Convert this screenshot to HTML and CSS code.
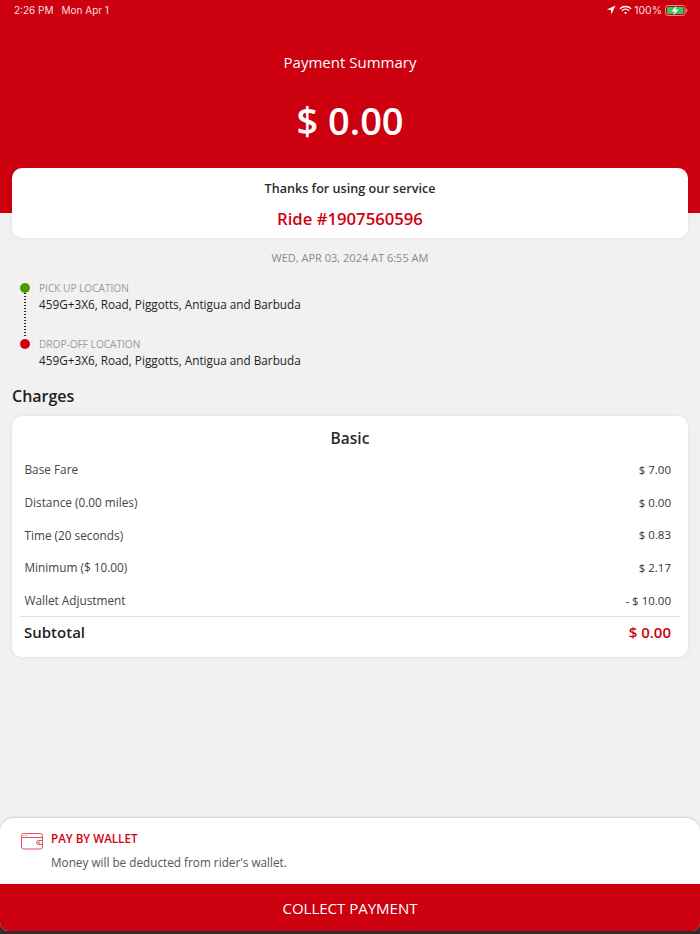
FILE: index.html
```html
<!DOCTYPE html>
<html lang="en">
<head>
    <meta charset="UTF-8">
    <meta name="viewport" content="width=device-width, initial-scale=1.0">
    <title>Payment Summary</title>
    <link rel="stylesheet" href="styles.css">
</head>
<body>
    <div class="page">
        <!-- Header -->
        <div class="header">
            <div class="status-bar">
                <div class="status-left">
                    <span>2:26 PM</span>
                    <span>Mon Apr 1</span>
                </div>
                <div class="status-right">
                    <svg class="icon-location" width="10" height="10" viewBox="0 0 10 10"><path d="M9.5 .5 L.8 4.6 L4.9 5.1 L5.4 9.2 Z" fill="#fff"/></svg>
                    <svg class="icon-wifi" width="13" height="10" viewBox="0 0 14 10" fill="none" stroke="#fff" stroke-width="1.5"><path d="M1 3.6 C4.4 .4 9.6 .4 13 3.6"/><path d="M3.2 5.8 C5.4 3.8 8.6 3.8 10.8 5.8"/><path d="M7 9.6 L5.3 7.8 C6.3 7 7.7 7 8.7 7.8 Z" fill="#fff" stroke="none"/></svg>
                    <span class="battery-text">100%</span>
                    <svg class="icon-battery" width="23" height="11" viewBox="0 0 23 11"><rect x=".5" y=".5" width="19.5" height="10" rx="2.5" fill="none" stroke="#e8898f"/><rect x="2" y="2" width="16.5" height="7" rx="1" fill="#35c759"/><path d="M21 3.6 C22 3.9 22.4 4.6 22.4 5.5 C22.4 6.4 22 7.1 21 7.4 Z" fill="#e8898f"/><path d="M11.6 .6 L6.6 6.4 L9.6 6.4 L8.4 10.4 L13.4 4.6 L10.4 4.6 Z" fill="#fff"/></svg>
                </div>
            </div>
            <div class="header-title">Payment Summary</div>
            <div class="header-amount">$ 0.00</div>
        </div>

        <!-- Thanks card -->
        <div class="card thanks-card">
            <div class="thanks-text">Thanks for using our service</div>
            <div class="ride-number">Ride #1907560596</div>
        </div>

        <div class="ride-date">WED, APR 03, 2024 AT 6:55 AM</div>

        <!-- Locations -->
        <div class="route">
            <div class="route-stop">
                <span class="dot dot-green"></span>
                <div class="stop-label">PICK UP LOCATION</div>
                <div class="stop-address">459G+3X6, Road, Piggotts, Antigua and Barbuda</div>
            </div>
            <div class="route-stop">
                <span class="dot dot-red"></span>
                <div class="stop-label">DROP-OFF LOCATION</div>
                <div class="stop-address">459G+3X6, Road, Piggotts, Antigua and Barbuda</div>
            </div>
        </div>

        <h2 class="charges-title">Charges</h2>

        <!-- Charges card -->
        <div class="card charges-card">
            <div class="charges-type">Basic</div>
            <div class="charge-row"><span>Base Fare</span><span class="charge-value">$ 7.00</span></div>
            <div class="charge-row"><span>Distance (0.00 miles)</span><span class="charge-value">$ 0.00</span></div>
            <div class="charge-row"><span>Time (20 seconds)</span><span class="charge-value">$ 0.83</span></div>
            <div class="charge-row"><span>Minimum ($ 10.00)</span><span class="charge-value">$ 2.17</span></div>
            <div class="charge-row"><span>Wallet Adjustment</span><span class="charge-value">- $ 10.00</span></div>
            <div class="subtotal-row"><span>Subtotal</span><span class="subtotal-value">$ 0.00</span></div>
        </div>

        <!-- Payment method -->
        <div class="footer">
            <div class="wallet-box">
                <div class="wallet-head">
                    <svg class="icon-wallet" width="22" height="17" viewBox="0 0 22 17" fill="none" stroke="#e2545b" stroke-width="1"><rect x=".5" y=".5" width="21" height="15.5" rx="2"/><path d="M.5 4.5 H21.5"/><path d="M21.5 7.5 H17.5 a2 2 0 0 0 0 4 H21.5"/><circle cx="18" cy="9.5" r=".8"/><path d="M2.5 2.5 H3.5 M5 2.5 H6" /></svg>
                    <span class="wallet-title">PAY BY WALLET</span>
                </div>
                <div class="wallet-note">Money will be deducted from rider's wallet.</div>
            </div>
            <button class="collect-btn">COLLECT PAYMENT</button>
        </div>
    </div>
</body>
</html>
```

FILE: styles.css
```css
/* General */
* { box-sizing: border-box; }
html, body { height: 100%; }
body { margin: 0; background-color: #2e2e2e; font-family: "Open Sans", sans-serif; color: #1f1f1f; }
.page { height: 931px; display: flex; flex-direction: column; background-color: #f1f1f1; border-radius: 0 0 8px 8px; overflow: hidden; }

/* Header */
.header { height: 213px; flex-shrink: 0; background-color: #cd000f; color: #fff; text-align: center; }
.status-bar { height: 20px; display: flex; justify-content: space-between; align-items: center; padding: 0 12px 0 14px; font-family: Inter, sans-serif; font-size: 10px; color: #f6dfe0; }
.status-left { display: flex; gap: 8px; }
.status-right { display: flex; align-items: center; gap: 2px; }
.icon-location { margin-right: 1px; }
.icon-battery { margin-left: 1px; }
.battery-text { font-size: 10.5px; }
.header-title { margin-top: 31px; font-size: 15px; line-height: 22px; }
.header-amount { margin-top: 21px; font-size: 38px; line-height: 52px; font-weight: 600; }

/* Cards */
.card { background: #fff; margin: 0 12px; border-radius: 10px; box-shadow: 0 0 4px rgba(0, 0, 0, 0.08); }
.thanks-card { height: 70px; margin-top: -45px; flex-shrink: 0; text-align: center; padding-top: 12px; position: relative; }
.thanks-text { font-size: 12.6px; line-height: 18px; font-weight: 600; color: #2b2b2b; }
.ride-number { margin-top: 10px; font-size: 16.7px; line-height: 22px; font-weight: 600; color: #d0000f; }
.ride-date { margin-top: 12px; text-align: center; font-size: 11px; line-height: 15px; color: #8a8a8a; }

/* Locations */
.route { margin: 16px 0 0 20px; }
.route-stop { position: relative; padding-left: 19px; height: 56px; }
.route-stop:last-child { height: 46px; }
.stop-label { font-size: 10.1px; line-height: 14px; color: #9a9a9a; }
.stop-address { font-size: 11.75px; line-height: 18px; color: #1f1f1f; }
.dot { position: absolute; left: 0; top: 2px; width: 10px; height: 10px; border-radius: 50%; }
.dot-green { background-color: #4f9a00; }
.dot-red { background-color: #d0000f; }
.route-stop:first-child::after { content: ""; position: absolute; left: 4px; top: 12px; width: 2px; height: 44px; background: linear-gradient(#222 50%, transparent 50%) 0 0 / 100% 3px; }

.charges-title { margin: 1px 12px 0; font-size: 16px; line-height: 24px; font-weight: 600; color: #222; }

/* Charges */
.charges-card { margin-top: 8px; height: 241px; flex-shrink: 0; padding: 0 8px; }
.charges-type { text-align: center; padding-top: 11px; font-size: 15.5px; line-height: 22px; font-weight: 600; color: #2b2b2b; margin-bottom: 4px; }
.charge-row { display: flex; justify-content: space-between; align-items: center; height: 32.7px; padding: 0 9px 0 4.5px; font-size: 11.8px; color: #444; }
.charge-value { color: #333; font-size: 11.5px; }
.subtotal-row { display: flex; justify-content: space-between; align-items: center; height: 32px; padding: 0 9px 2px 4px; border-top: 1px solid #dedede; font-size: 15px; font-weight: 600; color: #1f1f1f; }
.subtotal-value { color: #d0000f; }

/* Footer */
.footer { margin-top: auto; }
.wallet-box { height: 66px; background: #fff; border-radius: 14px 14px 0 0; box-shadow: 0 -1px 2px rgba(0, 0, 0, 0.15); padding: 13px 20px 0 21px; }
.wallet-head { display: flex; align-items: flex-start; gap: 8px; }
.icon-wallet { margin-top: 2px; }
.wallet-title { font-size: 11.6px; line-height: 16px; font-weight: 600; color: #d0000f; }
.wallet-note { margin: 4px 0 0 30px; font-size: 11.75px; line-height: 17px; color: #555; }
.collect-btn { display: block; width: 100%; height: 47px; border: none; background-color: #cd000f; color: #fff; font-family: "Open Sans", sans-serif; font-size: 15px; cursor: pointer; }
```
